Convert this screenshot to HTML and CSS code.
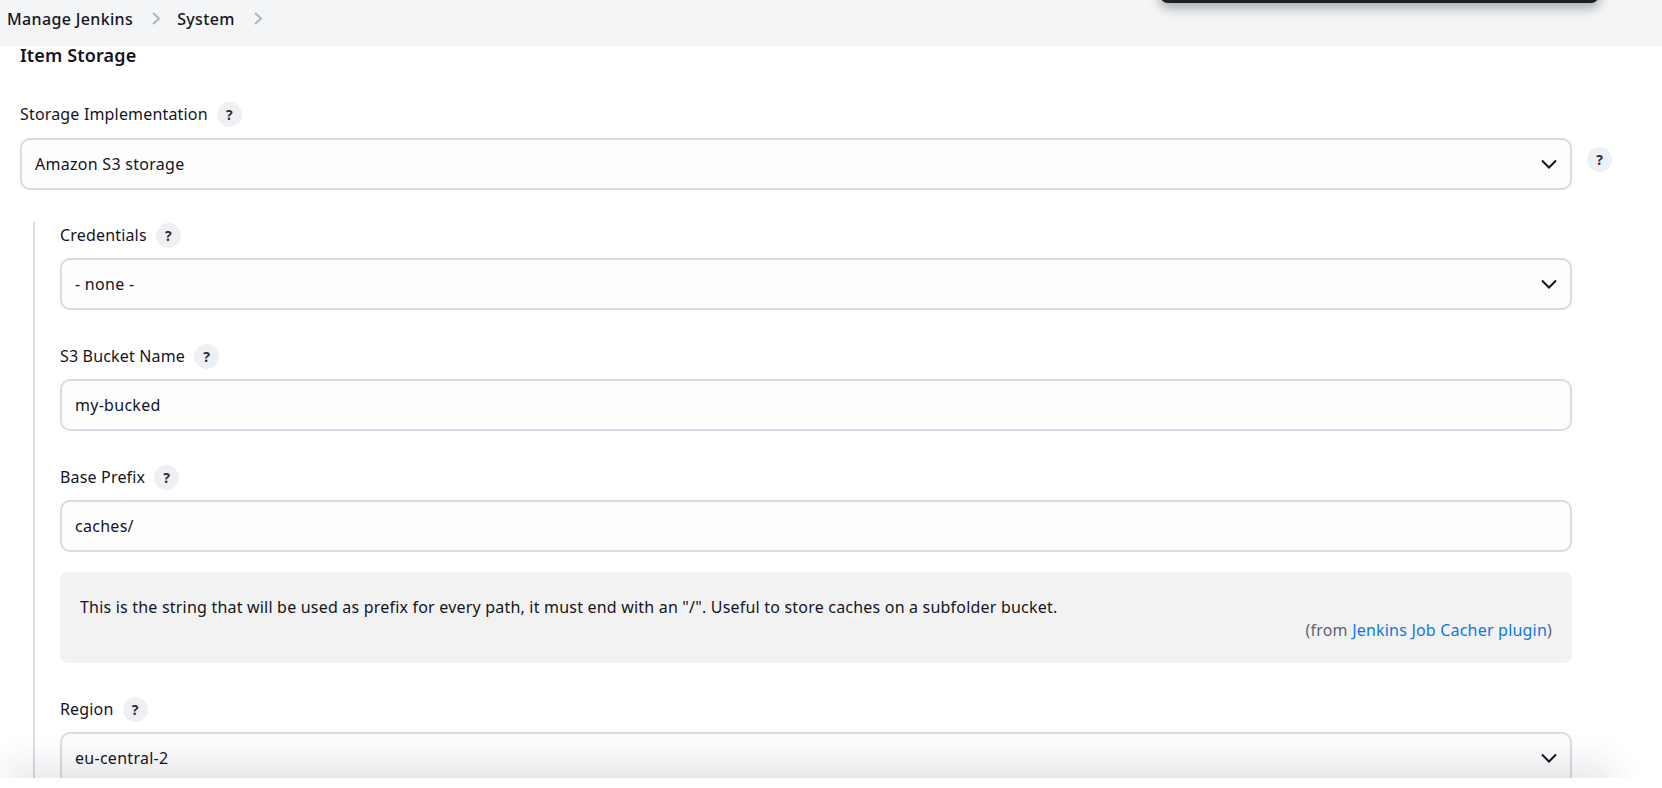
FILE: index.html
```html
<!DOCTYPE html>
<html lang="en">
<head>
<meta charset="utf-8">
<title>System - Jenkins</title>
<link rel="stylesheet" href="styles.css">
</head>
<body>
<div class="viewport">
  <header class="topbar">
    <nav class="crumbs">
      <a class="crumb" href="#">Manage Jenkins</a>
      <svg class="crumb-sep" viewBox="0 0 8 13"><path d="M1 1l6 5.5-6 5.5"/></svg>
      <a class="crumb" href="#">System</a>
      <svg class="crumb-sep" viewBox="0 0 8 13"><path d="M1 1l6 5.5-6 5.5"/></svg>
    </nav>
    <div class="popup"></div>
  </header>
  <main class="content">
    <h2 class="section-title">Item Storage</h2>
    <div class="label-row label-row-first">
      <label class="label">Storage Implementation</label>
      <span class="help-btn">?</span>
    </div>
    <div class="control-row">
      <div class="select-wrap">
        <select class="control"><option>Amazon S3 storage</option></select>
        <svg class="chevron" viewBox="0 0 16 10"><path d="M1 1.5 8 8.5l7-7"/></svg>
      </div>
      <span class="help-btn help-side">?</span>
    </div>
    <div class="nested">
      <div class="field">
        <div class="label-row"><label class="label">Credentials</label><span class="help-btn">?</span></div>
        <div class="select-wrap">
          <select class="control"><option>- none -</option></select>
          <svg class="chevron" viewBox="0 0 16 10"><path d="M1 1.5 8 8.5l7-7"/></svg>
        </div>
      </div>
      <div class="field">
        <div class="label-row"><label class="label">S3 Bucket Name</label><span class="help-btn">?</span></div>
        <input class="control" type="text" value="my-bucked">
      </div>
      <div class="field">
        <div class="label-row"><label class="label">Base Prefix</label><span class="help-btn">?</span></div>
        <input class="control" type="text" value="caches/">
        <div class="help-area">
          <p class="help-text">This is the string that will be used as prefix for every path, it must end with an "/". Useful to store caches on a subfolder bucket.</p>
          <p class="help-source">(from <a href="#">Jenkins Job Cacher plugin</a>)</p>
        </div>
      </div>
      <div class="field">
        <div class="label-row"><label class="label">Region</label><span class="help-btn">?</span></div>
        <div class="select-wrap">
          <select class="control"><option>eu-central-2</option></select>
          <svg class="chevron" viewBox="0 0 16 10"><path d="M1 1.5 8 8.5l7-7"/></svg>
        </div>
      </div>
    </div>
  </main>
  <div class="bottom-shadow"></div>
</div>
</body>
</html>
```
FILE: styles.css
```css
* { box-sizing: border-box; }
html, body { margin: 0; padding: 0; background: #fff; overflow: hidden; }
body { font-family: "Noto Sans", "Open Sans", sans-serif; font-size: 16px; letter-spacing: .17px; color: #14141f; }
.viewport { position: relative; height: 778px; overflow: hidden; background: #fff; }
.topbar { position: relative; height: 46px; background: #f4f5f7; }
.crumbs { display: flex; align-items: center; height: 37px; padding-left: 7px; }
.crumb { color: #14141f; text-decoration: none; font-weight: 500; font-size: 16px; letter-spacing: .35px; }
.crumb-sep { width: 8px; height: 13px; margin: 0 17px 0 19px; fill: none; stroke: #aab6ca; stroke-width: 2; }
.popup { position: absolute; left: 1160px; top: -20px; width: 439px; height: 23px; background: #1b2122; border-radius: 8px; box-shadow: 0 5px 12px rgba(0,0,0,.32); }
.content { width: 1552px; margin-left: 20px; }
.section-title { margin: 0; height: 21px; line-height: 19px; font-size: 18px; font-weight: 600; letter-spacing: .15px; }
.label-row { display: flex; align-items: center; height: 25px; gap: 9px; margin-bottom: 10px; }
.label-row-first { margin-top: 35px; margin-bottom: 11px; }
.label { line-height: 25px; }
.help-btn { display: flex; align-items: center; justify-content: center; width: 25px; height: 25px; flex: none; border-radius: 50%; background: #eef0f3; font-size: 14px; font-weight: 700; letter-spacing: 0; color: #2b2b35; }
.control-row { position: relative; }
.help-side { position: absolute; left: 1567px; top: 9px; }
.select-wrap { position: relative; }
.control { display: block; width: 100%; height: 52px; padding: 0 13px; font: inherit; letter-spacing: .28px; color: #14141f; background: #fdfdfe; border: 2px solid #d6dce8; border-radius: 10px; appearance: none; outline: none; }
.chevron { position: absolute; right: 15px; top: 21px; width: 16px; height: 10px; fill: none; stroke: #14141f; stroke-width: 2; pointer-events: none; }
.nested { margin-top: 32px; margin-left: 13px; padding-left: 25px; border-left: 2px solid #d6dce8; }
.field { margin-bottom: 34px; }
.nested .field:first-child { padding-top: 1px; }
.help-area { margin-top: 20px; height: 91px; padding: 24px 20px 0; background: #f2f2f2; border-radius: 8px; letter-spacing: .2px; }
.help-text { margin: 0; line-height: 23px; }
.help-source { margin: 0; line-height: 23px; text-align: right; color: #5f6470; }
.help-source a { color: #0f76e6; text-decoration: none; }
.bottom-shadow { position: absolute; left: 20px; right: 62px; top: 778px; height: 20px; box-shadow: 0 0 36px 12px rgba(30,30,60,.12); }
```
